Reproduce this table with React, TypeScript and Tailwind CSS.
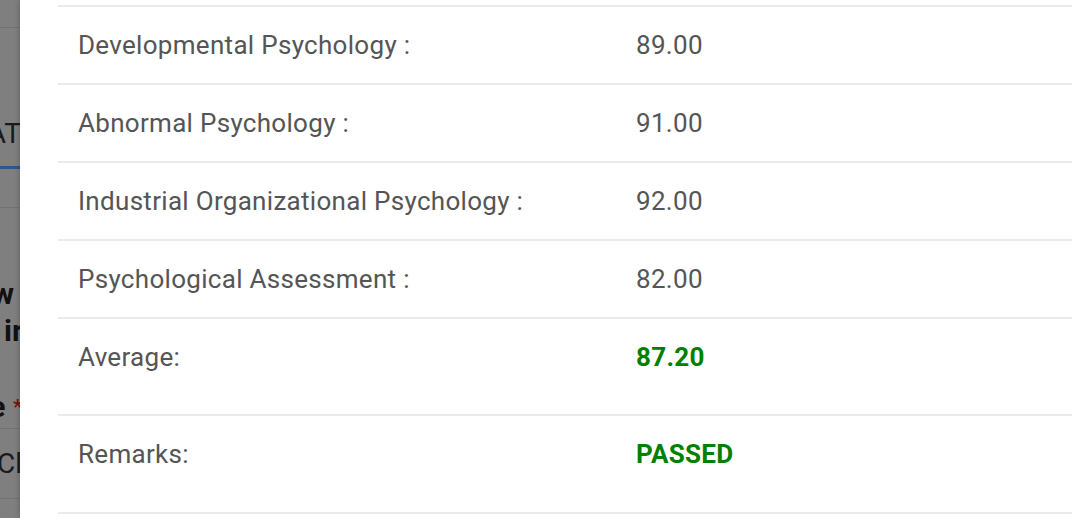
import React from "react";

const rows = [
  { label: "Developmental Psychology :", value: "89.00" },
  { label: "Abnormal Psychology :", value: "91.00" },
  { label: "Industrial Organizational Psychology :", value: "92.00" },
  { label: "Psychological Assessment :", value: "82.00" },
];

export default function App() {
  return (
    <div className="w-[1072px] h-[518px] flex overflow-hidden bg-white font-['Roboto',sans-serif]">
      {/* background page under overlay */}
      <div className="w-[20px] shrink-0 h-full bg-[#7f7f7f] flex flex-col overflow-hidden">
        <div className="h-[28px] shrink-0 border-b border-[#737373]" />
        <div className="h-[138px] shrink-0 flex items-end justify-end pb-[16px]">
          <span className="text-[28px] leading-[32px] text-[#1a1a1a] whitespace-nowrap mr-[-1px]">AT</span>
        </div>
        <div className="h-[3px] shrink-0 bg-[#2a5a88]" />
        <div className="h-[39px] shrink-0 border-b border-[#727272]" />
        <div className="h-[67px] shrink-0" />
        <div className="flex flex-col items-end">
          <span className="text-[30px] leading-[37px] font-bold text-[#111] whitespace-nowrap mr-[6px]">w</span>
          <span className="text-[30px] leading-[37px] font-bold text-[#111] whitespace-nowrap mr-[-3px]">ir</span>
        </div>
        <div className="h-[41px] shrink-0" />
        <div className="h-[39px] shrink-0 flex items-start justify-end border-b border-[#727272]">
          <span className="text-[30px] leading-[34px] font-bold text-[#111] whitespace-nowrap mr-[-2px]">
            e <span className="text-[#7a0f0f] text-[20px] align-top">*</span>
          </span>
        </div>
        <div className="h-[70px] shrink-0 flex items-center justify-end border-b border-[#727272]">
          <span className="text-[28px] leading-[32px] text-[#1a1a1a] whitespace-nowrap mr-[-2px]">Cl</span>
        </div>
      </div>

      {/* modal panel */}
      <div className="flex-1 h-full bg-white pl-[38px] pt-[5px] shadow-[-2px_0_4px_rgba(0,0,0,0.15)]">
        <div className="border-b-2 border-[#ebebeb] tracking-[0.3px]">
          {rows.map((r) => (
            <div
              key={r.label}
              className="grid grid-cols-[578px_1fr] border-t-2 border-[#ebebeb] pt-[20px] pb-[20px] text-[26px] leading-[36px] text-[#555]"
            >
              <div className="pl-[20px]">{r.label}</div>
              <div>{r.value}</div>
            </div>
          ))}
          <div className="grid grid-cols-[578px_1fr] border-t-2 border-[#ebebeb] pt-[20px] pb-[39px] text-[26px] leading-[36px] text-[#555]">
            <div className="pl-[20px]">Average:</div>
            <div className="font-bold text-[#008000]">87.20</div>
          </div>
          <div className="grid grid-cols-[578px_1fr] border-t-2 border-[#ebebeb] pt-[20px] pb-[40px] text-[26px] leading-[36px] text-[#555]">
            <div className="pl-[20px]">Remarks:</div>
            <div className="font-bold text-[#008000]">PASSED</div>
          </div>
        </div>
      </div>
    </div>
  );
}
